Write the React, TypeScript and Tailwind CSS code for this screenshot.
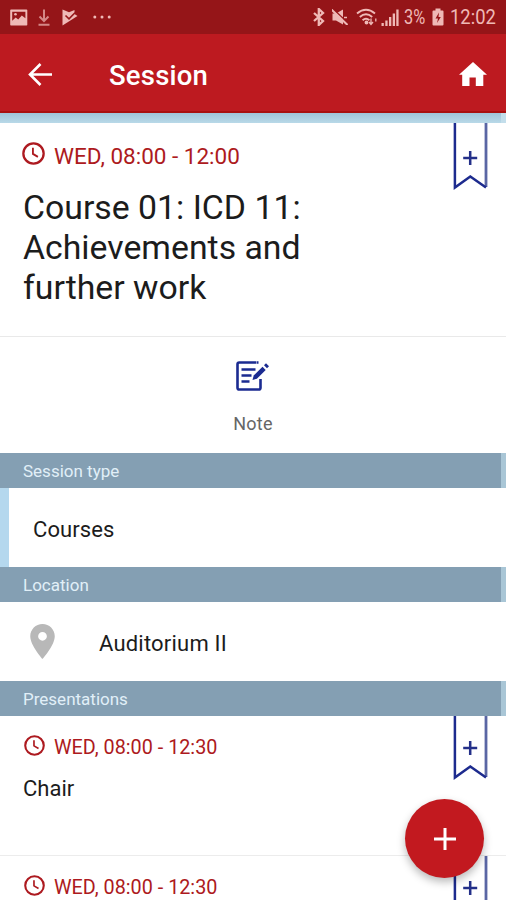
import React from 'react';

interface Presentation {
  time: string;
  title: string;
}

const PRESENTATIONS: Presentation[] = [
  { time: 'WED, 08:00 - 12:30', title: 'Chair' },
  { time: 'WED, 08:00 - 12:30', title: '' },
];

const ClockIcon = ({ className }: { className: string }) => (
  <svg viewBox="0 0 24 24" fill="none" stroke="currentColor" strokeWidth="2.4" className={className}>
    <circle cx="12" cy="12" r="10.6" />
    <path d="M11.4 6v6.4l5.200 3.100" strokeWidth="1.9" />
  </svg>
);

// Ribbon hanging from the top edge of a session card
const Ribbon = ({ className }: { className: string }) => (
  <button className={`absolute left-[453px] h-[68px] w-[35px] ${className}`} aria-label="Add to favourites">
    <svg viewBox="0 0 35 68" fill="none" className="h-full w-full">
      <path d="M33 0V64" stroke="#5a66a4" strokeWidth="2.8" />
      <path d="M1.900 0V64.500L17.300 53.500L33 64.500" stroke="#1d2b8e" strokeWidth="2.5" />
      <path d="M17.200 28V42M10.200 35H24.200" stroke="#243089" strokeWidth="2.5" />
    </svg>
  </button>
);

const SectionHeader = ({ label }: { label: string }) => (
  <div className="flex h-[35px] items-center border-r-[5px] border-[#a9c6d6] bg-[#849fb3] pt-0.5 pl-[23px] text-[17px] text-[#e1eff8]">
    {label}
  </div>
);

const StatusBar = () => (
  <div className="flex h-[34px] items-center justify-between bg-[#951518] pr-[10px] pl-[10px] text-[#efb9b6]">
    <div className="flex items-center">
      <svg viewBox="0 0 18 17" className="h-[17px] w-[18px]" fill="currentColor">
        <path fillRule="evenodd" d="M1 .5h15.500q.8 0 .8.8v14.400q0 .8-.8.8H1q-.8 0-.8-.8V1.300Q.2.500 1 .500zM2.200 2.700v9.100l3.500-3.300 2.500 2 3.600-4 3.600 2.700V2.700z" />
        <circle cx="5.500" cy="5.300" r="1.300" />
      </svg>
      <svg viewBox="0 0 12 17" className="ml-[10px] h-[17px] w-3 opacity-70" fill="none" stroke="currentColor" strokeWidth="2">
        <path d="M6 .5V12M1.500 7.500L6 12l4.500-4.500M.5 15.700h11" />
      </svg>
      <svg viewBox="0 0 16 17" className="ml-3 h-[17px] w-4">
        <path d="M.5.500L7 3.200 12.500 1v4L15.500 7 .5 16.500z" fill="currentColor" />
        <path d="M3.500 6.500L7 9.800l6-6" fill="none" stroke="#951518" strokeWidth="1.600" />
      </svg>
      <svg viewBox="0 0 18 4" className="ml-[15px] h-1 w-[18px]" fill="currentColor">
        <circle cx="1.800" cy="2" r="1.500" />
        <circle cx="9" cy="2" r="1.500" />
        <circle cx="16.200" cy="2" r="1.500" />
      </svg>
    </div>
    <div className="flex items-center">
      <svg viewBox="0 0 12 18" className="h-[18px] w-3" fill="none" stroke="currentColor" strokeWidth="2.300">
        <path d="M1 5l9 8-4.200 4V1L10 5l-9 8" />
      </svg>
      <svg viewBox="0 0 16 16" className="ml-[7px] h-4 w-4" fill="currentColor">
        <path d="M.5 4.500h3.500L11 .500v15L4 11.500H.5z" />
        <path d="M.5-.5l16 15" stroke="#951518" strokeWidth="1.500" />
        <path d="M-.5.500l16 15.500" stroke="currentColor" strokeWidth="2" />
        <path d="M12 8.500h3" stroke="currentColor" strokeWidth="1.500" />
      </svg>
      <svg viewBox="0 0 22 18" className="ml-2 h-[18px] w-[22px]" fill="none" stroke="currentColor" strokeWidth="1.900">
        <path d="M1 5.500Q10-2 19 5.500M3.800 9Q10 3.500 16.200 9M6.600 12.300Q10 9.200 13.400 12.300" />
        <circle cx="10.500" cy="14.500" r="1" fill="currentColor" />
        <path d="M15 10.500v5.500M13 14l2 2.500 2-2.500M19.800 13.500v-3" strokeWidth="1.300" />
      </svg>
      <svg viewBox="0 0 18 17" className="ml-[3px] h-[17px] w-[18px]" fill="currentColor">
        <path d="M.5 14h2.300v3H.5zM4.300 11.500h2.300V17H4.300zM8 8h2.300v9H8zM11.700 4.500H14V17h-2.300zM15.300.5h2.300V17h-2.300z" />
      </svg>
      <span className="ml-[5px] w-[23px] origin-left scale-x-[0.82] text-[20px] leading-[34px] whitespace-nowrap">3%</span>
      <svg viewBox="0 0 12 18" className="ml-[5px] h-[18px] w-3">
        <path d="M3.500.5h5v2h2q1 0 1 1v13q0 1-1 1h-9q-1 0-1-1v-13q0-1 1-1h2z" fill="currentColor" />
        <path d="M7 4.500L3.500 10.500h2.500L5 15l3.800-6H6.500z" fill="#951518" />
      </svg>
      <span className="ml-1.5 w-[46px] origin-left scale-x-[0.92] text-[20px] leading-[34px] whitespace-nowrap">12:02</span>
    </div>
  </div>
);

const App: React.FC = () => {
  return (
    <div className="relative h-[900px] w-[506px] overflow-hidden bg-white font-[Roboto,sans-serif] text-[#1c1c1c]">
      <StatusBar />

      <header className="flex h-[79px] items-center border-b-2 border-[#a9100f] bg-[#bd1a20] pt-[3px] pr-[19px] pl-[28px] text-white">
        <svg viewBox="0 0 24 23" className="h-[23px] w-6" fill="none" stroke="currentColor" strokeWidth="2.600">
          <path d="M24 11.500H3M12.500 1L2 11.500 12.500 22" />
        </svg>
        <h1 className="ml-[57px] pt-[3px] text-[27.500px] font-medium tracking-[0.200px]">Session</h1>
        <svg viewBox="0 0 28 24" className="ml-auto h-6 w-7" fill="currentColor">
          <path d="M14 0L0 12.800h3.200V24h7.300v-8.500h6.300V24h7.500V12.800H28z" />
        </svg>
      </header>

      <div className="h-[10px] border-r-[5px] border-[#c3deeb] bg-linear-to-b from-[#9fc4d8] to-[#b9d9e8]" />

      <section className="relative h-[214px] border-b border-[#e9e9e9] pl-[22px]">
        <div className="flex items-center pt-[17px] text-[#ad1a20]">
          <ClockIcon className="-mt-[5px] h-[23px] w-[23px]" />
          <span className="ml-[9px] text-[22.500px] leading-[32px]">WED, 08:00 - 12:00</span>
        </div>
        <h2 className="mt-4 ml-px w-[320px] text-[33.800px] leading-10">
          Course 01: ICD 11: Achievements and further work
        </h2>
        <Ribbon className="top-0" />
      </section>

      <section className="flex h-[116px] flex-col items-center">
        <svg viewBox="0 0 34 30" className="mt-6 h-[30px] w-[34px]" fill="none" stroke="#1b2b91" strokeWidth="2.600">
          <path d="M20.500 1.500H3.300Q1.500 1.500 1.500 3.300v23.400q0 1.800 1.800 1.800h19.400q1.800 0 1.800-1.800V18M21 1.500h1.500" />
          <path d="M5.500 8.500h14M5.500 14.500h10M5.500 20.500h8" />
          <path d="M16.500 19l1.200-4.500L26.500 5.800l3.200 3.100-8.800 8.800z" fill="#1b2b91" stroke="none" />
          <path d="M28 4.300l2-2 3 3-2 2z" fill="#1b2b91" stroke="none" />
        </svg>
        <span className="mt-[19px] text-[18px] leading-7 tracking-[0.300px] text-[#666]">Note</span>
      </section>

      <SectionHeader label="Session type" />
      <div className="flex h-[79px] items-center border-l-[9px] border-[#b5d8ee] pt-1 pl-6 text-[22px] tracking-[0.100px]">
        Courses
      </div>

      <SectionHeader label="Location" />
      <div className="flex h-[79px] items-center pl-[30px]">
        <svg viewBox="5 2 14 20" className="h-[35px] w-[25px]" fill="#b8b8b8">
          <path d="M12 2C8.130 2 5 5.130 5 9c0 5.250 7 13 7 13s7-7.750 7-13c0-3.870-3.130-7-7-7zm0 9.500a2.500 2.500 0 010-5 2.500 2.500 0 010 5z" />
        </svg>
        <span className="ml-[44px] pt-1 text-[22px] tracking-[0.200px]">Auditorium II</span>
      </div>

      <SectionHeader label="Presentations" />
      {PRESENTATIONS.map((item, index) => (
        <div key={index} className="relative h-[140px] overflow-hidden border-b border-[#ececec] pl-6">
          <div className="flex items-center pt-[15px] text-[#ad1a20]">
            <ClockIcon className="-mt-[4px] h-[21px] w-[21px]" />
            <span className="ml-[9px] pt-px text-[19.800px] leading-8">{item.time}</span>
          </div>
          <div className="mt-[9px] -ml-px text-[22px] leading-8">{item.title}</div>
          <Ribbon className="-top-[3px]" />
        </div>
      ))}

      {/* Floating add button */}
      <button
        className="absolute top-[799px] left-[405px] flex h-[79px] w-[79px] items-center justify-center rounded-full bg-[#c2191f] shadow-[0_4px_8px_rgba(0,0,0,0.280)]"
        aria-label="Add"
      >
        <svg viewBox="0 0 22 22" className="h-[22px] w-[22px]" stroke="#fff" strokeWidth="3">
          <path d="M11 0v22M0 11h22" />
        </svg>
      </button>
    </div>
  );
};

export default App;
